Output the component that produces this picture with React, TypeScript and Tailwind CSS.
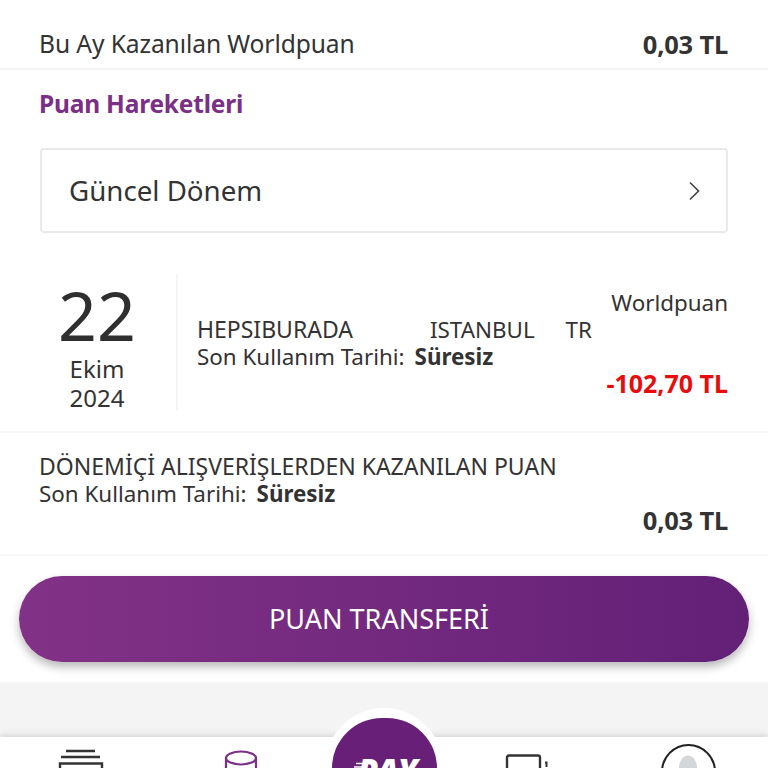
import * as React from "react";

function NavIcons() {
  return (
    <div className="relative h-[31px] bg-white shadow-[0_-2px_6px_rgba(0,0,0,0.12)]">
      {/* cards */}
      <svg className="absolute left-[58px] top-[12px]" width="46" height="20" viewBox="0 0 46 20" fill="none" stroke="#333" strokeWidth="2.5">
        <path d="M8 2h29M3 8h39" />
        <path d="M2 20V14.5h42V20" strokeWidth="2.4" />
      </svg>
      {/* coins */}
      <svg className="absolute left-[222px] top-[13px]" width="38" height="19" viewBox="0 0 38 19" fill="none" stroke="#7b2f86" strokeWidth="2.2">
        <ellipse cx="19" cy="8" rx="15" ry="6.5" />
        <path d="M4 8v14M34 8v14" />
      </svg>
      {/* device */}
      <svg className="absolute left-[504px] top-[17px]" width="46" height="14" viewBox="0 0 46 14" fill="none" stroke="#333" strokeWidth="2.4">
        <path d="M3 14V3.5q0-2 2-2h29q2 0 2 2V14" />
        <path d="M41 8.5h1.5V13" strokeWidth="2" />
      </svg>
      {/* avatar */}
      <svg className="absolute left-[658px] top-[6px]" width="60" height="26" viewBox="0 0 60 26" fill="none">
        <ellipse cx="30.5" cy="29" rx="26.5" ry="27" stroke="#222" strokeWidth="2" />
        <ellipse cx="30" cy="25" rx="9" ry="12.5" fill="#d5d6da" />
      </svg>
    </div>
  );
}

export default function App() {
  return (
    <div className="relative h-[768px] w-[768px] overflow-hidden bg-white font-['Noto_Sans','Open_Sans',sans-serif] text-[#333]">
      <div className="flex h-[70px] items-end justify-between border-b-2 border-[#f5f5f5] pl-[39px] pr-10 pb-[7px] text-[24.6px] leading-[34px]">
        <span className="tracking-[-0.1px]">Bu Ay Kazanılan Worldpuan</span>
        <span className="text-[25.5px] font-bold tracking-[-0.2px]">0,03 TL</span>
      </div>

      <div className="pl-[39px] pr-10 pt-[17px]">
        <h2 className="text-[24.5px] font-bold leading-[34px] tracking-[-0.2px] text-[#7b2f86]">Puan Hareketleri</h2>
        <div className="ml-px mt-[27px] flex h-[85px] items-center justify-between rounded border-2 border-[#e9e9e9] pl-[27px] pr-[25px] text-[27.7px]">
          <span>Güncel Dönem</span>
          <svg width="14" height="22" viewBox="0 0 14 22" fill="none" stroke="#444" strokeWidth="1.6">
            <path d="M3 2.5l8.5 8.5L3 19.5" />
          </svg>
        </div>
      </div>

      <div className="mt-[41px] flex h-[159px] border-b-2 border-[#f7f7f7] pl-10 pr-10">
        <div className="flex h-[137px] w-[138px] shrink-0 flex-col items-center border-r-2 border-[#f5f5f5] pr-[22px] text-center">
          <span className="mt-[6px] text-[68px] leading-[70px] text-[#2f2f2f]">22</span>
          <span className="mt-[4px] text-[24px] leading-[30px]">Ekim</span>
          <span className="text-[24px] leading-[28px]">2024</span>
        </div>
        <div className="flex-1 pl-[19px] pt-[42px] text-[22.4px] leading-[27px]">
          <div className="flex w-[395px] justify-between">
            <span className="text-[23px]">HEPSIBURADA</span>
            <span className="ml-[46px]">ISTANBUL</span>
            <span>TR</span>
          </div>
          <div>
            Son Kullanım Tarihi:<span className="ml-[10px] font-bold">Süresiz</span>
          </div>
        </div>
        <div className="flex flex-col items-end pt-[15px] text-[22.4px] leading-[27px]">
          <span>Worldpuan</span>
          <span className="mt-[54px] text-[25px] font-bold text-[#e80c0c]">-102,70 TL</span>
        </div>
      </div>

      <div className="h-[123px] border-b-2 border-[#f7f7f7] pl-[39px] pr-10 pt-[20px] text-[22.4px] leading-[27px]">
        <div className="text-[23px]">DÖNEMİÇİ ALIŞVERİŞLERDEN KAZANILAN PUAN</div>
        <div>
          Son Kullanım Tarihi:<span className="ml-[10px] font-bold">Süresiz</span>
        </div>
        <div className="text-right text-[25.5px] font-bold tracking-[-0.2px]">0,03 TL</div>
      </div>

      <div className="h-[128px] border-b-2 border-[#f5f5f5] px-[19px] pt-[20px]">
        <button className="flex h-[86px] w-full items-center justify-center rounded-[43px] bg-gradient-to-r from-[#823286] to-[#632077] pr-[10px] text-[27px] text-white shadow-[0_5px_10px_rgba(0,0,0,0.28)]">
          PUAN TRANSFERİ
        </button>
      </div>

      <div className="h-[53px] bg-[#f4f4f4]" />
      <NavIcons />

      <div className="absolute left-[325px] top-[708px] h-[120px] w-[118px] rounded-full bg-white">
        <div className="absolute left-[7px] top-[10px] flex h-[100px] w-[105px] justify-center rounded-full bg-[#681f78]">
          <svg className="absolute left-[20px] top-[44px]" width="14" height="12" viewBox="0 0 14 12" fill="none" stroke="#fff" strokeWidth="1.6">
            <path d="M4 1.5h9M2 5h9M0 8.5h9" />
          </svg>
          <span className="ml-[6px] mt-[36px] text-[33px] font-black italic leading-none text-white">PAY</span>
        </div>
      </div>
    </div>
  );
}
